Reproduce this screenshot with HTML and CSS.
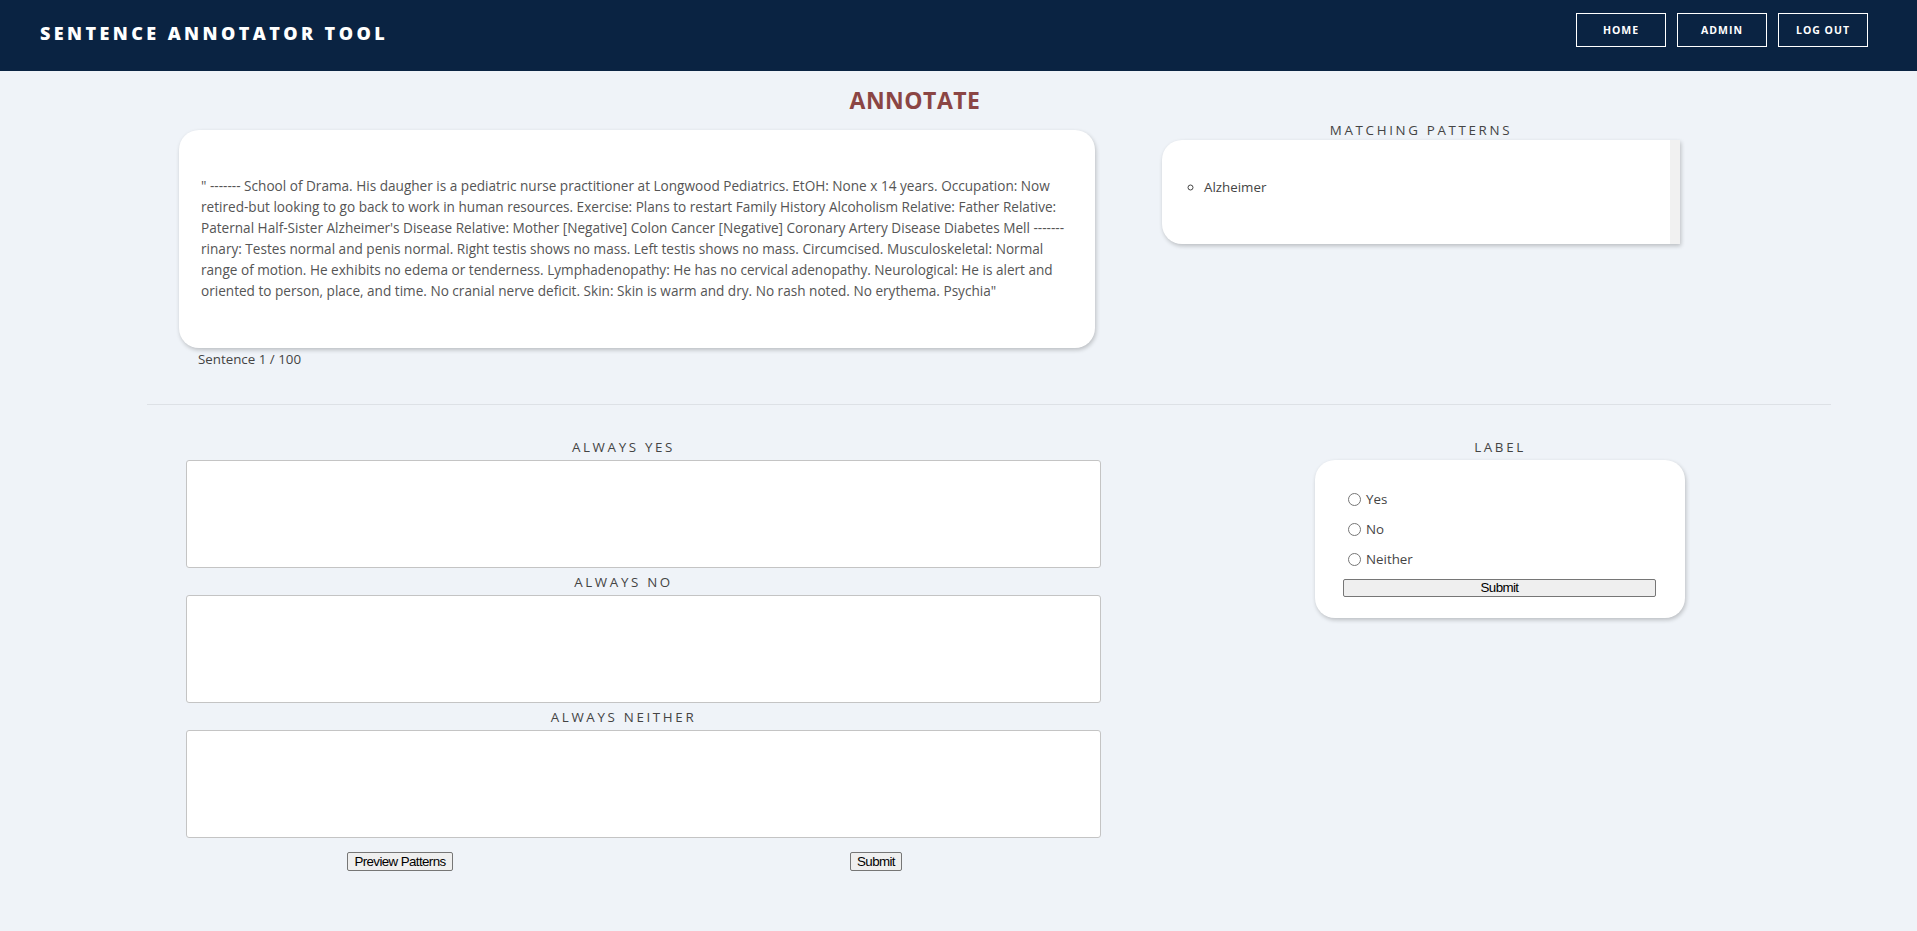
FILE: index.html
```html
<!DOCTYPE html>
<html lang="en">
<head>
<meta charset="utf-8">
<title>Sentence Annotator Tool</title>
<link rel="stylesheet" href="styles.css">
</head>
<body>
<header class="topbar">
  <div class="brand">SENTENCE ANNOTATOR TOOL</div>
  <nav class="nav">
    <a class="nav-btn" href="#">HOME</a>
    <a class="nav-btn" href="#">ADMIN</a>
    <a class="nav-btn" href="#">LOG OUT</a>
  </nav>
</header>
<main class="page">
  <h1 class="page-title">ANNOTATE</h1>
  <section class="top-row">
    <div class="sentence-col">
      <div class="card sentence-card">
        <p class="sentence-text">" ------- School of Drama. His daugher is a pediatric nurse practitioner at Longwood Pediatrics. EtOH: None x 14 years. Occupation: Now retired-but looking to go back to work in human resources. Exercise: Plans to restart Family History Alcoholism Relative: Father Relative: Paternal Half-Sister Alzheimer's Disease Relative: Mother [Negative] Colon Cancer [Negative] Coronary Artery Disease Diabetes Mell ------- rinary: Testes normal and penis normal. Right testis shows no mass. Left testis shows no mass. Circumcised. Musculoskeletal: Normal range of motion. He exhibits no edema or tenderness. Lymphadenopathy: He has no cervical adenopathy. Neurological: He is alert and oriented to person, place, and time. No cranial nerve deficit. Skin: Skin is warm and dry. No rash noted. No erythema. Psychia"</p>
      </div>
      <div class="counter">Sentence 1 / 100</div>
    </div>
    <div class="patterns-col">
      <h2 class="section-label">MATCHING PATTERNS</h2>
      <div class="patterns-card">
        <ul class="pattern-list">
          <li>Alzheimer</li>
        </ul>
        <div class="scroll-track"></div>
      </div>
    </div>
  </section>
  <hr class="divider">
  <section class="bottom-row">
    <div class="rules-col">
      <h2 class="section-label">ALWAYS YES</h2>
      <textarea class="rule-box"></textarea>
      <h2 class="section-label">ALWAYS NO</h2>
      <textarea class="rule-box"></textarea>
      <h2 class="section-label">ALWAYS NEITHER</h2>
      <textarea class="rule-box"></textarea>
      <div class="rule-actions">
        <button class="btn" type="button">Preview Patterns</button>
        <button class="btn" type="button">Submit</button>
      </div>
    </div>
    <div class="label-col">
      <h2 class="section-label">LABEL</h2>
      <form class="card label-card">
        <label class="radio-row"><input type="radio" name="lbl"> Yes</label>
        <label class="radio-row"><input type="radio" name="lbl"> No</label>
        <label class="radio-row"><input type="radio" name="lbl"> Neither</label>
        <button class="btn btn-full" type="button">Submit</button>
      </form>
    </div>
  </section>
</main>
</body>
</html>
```
FILE: styles.css
```css
* { box-sizing: border-box; }
html, body { margin: 0; padding: 0; }
body {
  background: #eff3f8;
  font-family: "Open Sans", "Noto Sans", sans-serif;
  color: #444;
  min-height: 931px;
}
.topbar {
  height: 71px;
  background: #0a2342;
  display: flex;
  justify-content: space-between;
  align-items: flex-start;
  padding: 0 49px 0 40px;
}
.brand {
  margin-top: 21px;
  color: #fff;
  font-weight: 800;
  font-size: 18px;
  letter-spacing: 3.4px;
  line-height: 24px;
}
.nav {
  display: flex;
  gap: 11px;
  margin-top: 13px;
}
.nav-btn {
  width: 90px;
  height: 34px;
  border: 1px solid #fff;
  color: #fff;
  text-decoration: none;
  font-weight: 700;
  font-size: 10.5px;
  letter-spacing: 1px;
  display: flex;
  align-items: center;
  justify-content: center;
}
.page {
  padding: 0 86px 0 147px;
}
.page-title {
  margin: 14px 0 0;
  padding-right: 148px;
  text-align: center;
  font-size: 23px;
  line-height: 30px;
  font-weight: 700;
  color: #8b4544;
  letter-spacing: 0.5px;
}
.top-row {
  display: flex;
  align-items: flex-start;
  padding-left: 32px;
}
.sentence-col {
  width: 916px;
  margin-top: 15px;
}
.card {
  background: #fff;
  border-radius: 20px;
  box-shadow: 1px 2px 4px rgba(0, 0, 0, 0.22);
}
.sentence-card {
  padding: 45px 22px 47px;
}
.sentence-text {
  margin: 0;
  font-size: 13.6px;
  line-height: 21px;
  color: #555;
}
.counter {
  margin-top: 2px;
  padding-left: 19px;
  font-size: 13.33px;
  line-height: 18px;
  color: #444;
}
.patterns-col {
  width: 518px;
  margin-left: 67px;
  margin-top: 6px;
}
.section-label {
  margin: 0;
  text-align: center;
  font-weight: 400;
  font-size: 13.33px;
  line-height: 19px;
  letter-spacing: 0.2em;
  color: #444;
}
.patterns-card {
  height: 104px;
  display: flex;
  background: #fff;
  border-radius: 20px 0 0 20px;
  box-shadow: 1px 2px 4px rgba(0, 0, 0, 0.22);
}
.pattern-list {
  flex: 1;
  margin: 0;
  padding: 37px 0 0 42px;
  list-style: circle;
  font-size: 13.33px;
  line-height: 20px;
  color: #444;
}
.scroll-track {
  width: 10px;
  background: #f1f1f1;
}
.divider {
  border: 0;
  border-top: 1px solid #dde1e6;
  margin: 36px 0 0;
  width: 1684px;
}
.bottom-row {
  display: flex;
  align-items: flex-start;
  margin-top: 33px;
}
.rules-col {
  width: 953px;
  display: flex;
  flex-direction: column;
}
.rules-col .section-label { margin-top: 5px; line-height: 18px; }
.rules-col .section-label:first-child { margin-top: 0; }
.rule-box {
  display: block;
  margin: 4px 0 0 39px;
  width: 915px;
  height: 108px;
  border: 1px solid #c4c4c4;
  border-radius: 3px;
  background: #fff;
  resize: none;
  font-family: "Liberation Mono", monospace;
}
.rule-actions {
  display: grid;
  grid-template-columns: 1fr 1fr;
  justify-items: center;
  width: 952px;
  margin: 14px 0 0 15px;
}
.btn {
  font-family: "Liberation Sans", Arial, sans-serif;
  font-size: 13.33px;
  letter-spacing: -0.6px;
  line-height: 15px;
  color: #000;
  background: #efefef;
  border: 1px solid #767676;
  border-radius: 2px;
  padding: 1px 6px;
}
.label-col {
  width: 370px;
  margin-left: 215px;
}
.label-col .section-label { line-height: 18px; }
.label-card {
  margin-top: 4px;
  padding: 24px 29px 21px 28px;
  display: flex;
  flex-direction: column;
}
.radio-row {
  height: 30px;
  display: flex;
  align-items: center;
  font-size: 13.33px;
  color: #444;
}
.radio-row input {
  width: 13px;
  height: 13px;
  margin: 0 5px 0 5px;
}
.btn-full {
  width: 100%;
  margin-top: 5px;
  padding: 0 6px;
  height: 18px;
  line-height: 16px;
}
```
